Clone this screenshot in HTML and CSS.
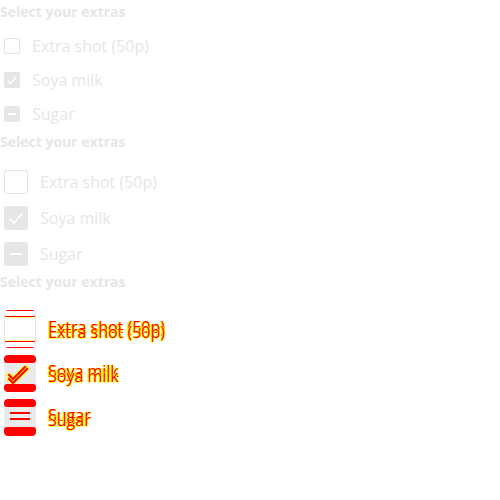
FILE: index.html
```html
<!DOCTYPE html>
<html>
<head>
<meta charset="utf-8">
<link rel="stylesheet" href="styles.css">
</head>
<body>
<section class="group small">
  <h2 class="title">Select your extras</h2>
  <div class="rows">
    <div class="row"><span class="box empty"></span><span class="text">Extra shot (50p)</span></div>
    <div class="row"><span class="box filled"><svg viewBox="0 0 16 16"><polyline points="3.5,8.5 6.5,11.5 12.5,4.5" fill="none" stroke="#fff" stroke-width="1.4"/></svg></span><span class="text">Soya milk</span></div>
    <div class="row"><span class="box filled"><svg viewBox="0 0 16 16"><line x1="4" y1="8" x2="12" y2="8" stroke="#fff" stroke-width="2"/></svg></span><span class="text">Sugar</span></div>
  </div>
</section>
<section class="group medium">
  <h2 class="title">Select your extras</h2>
  <div class="rows">
    <div class="row"><span class="box empty"></span><span class="text">Extra shot (50p)</span></div>
    <div class="row"><span class="box filled"><svg viewBox="0 0 24 24"><polyline points="5.5,12.5 10,17 18.5,7" fill="none" stroke="#fff" stroke-width="1.6"/></svg></span><span class="text">Soya milk</span></div>
    <div class="row"><span class="box filled"><svg viewBox="0 0 24 24"><line x1="6" y1="12" x2="18" y2="12" stroke="#fff" stroke-width="2"/></svg></span><span class="text">Sugar</span></div>
  </div>
</section>
<section class="group large">
  <h2 class="title">Select your extras</h2>
  <div class="rows">
    <div class="row"><span class="box diff outline"><span class="band"></span><span class="mid"></span><span class="band"></span></span><span class="text diff-text">Extra shot (50p)</span></div>
    <div class="row"><span class="box diff solid"><span class="band"></span><span class="mid"><svg viewBox="0 0 32 21"><g fill="none" stroke-linecap="square"><polyline points="5,12 9,16 21,4" stroke="#ff0" stroke-width="4"/><polyline points="5,16 9,20 23,6" stroke="#ff0" stroke-width="4"/><polyline points="5,12 9,16 21,4" stroke="#f00" stroke-width="2"/><polyline points="5,16 9,20 23,6" stroke="#f00" stroke-width="2"/></g></svg></span><span class="band"></span></span><span class="text diff-text">Soya milk</span></div>
    <div class="row"><span class="box diff solid"><span class="band"></span><span class="mid"><svg viewBox="0 0 32 20"><line x1="6" y1="6" x2="26" y2="6" stroke="#f00" stroke-width="2"/><line x1="6" y1="12" x2="26" y2="12" stroke="#f00" stroke-width="2"/></svg></span><span class="band"></span></span><span class="text diff-text">Sugar</span></div>
  </div>
</section>
</body>
</html>
```
FILE: styles.css
```css
html, body {
  margin: 0;
  padding: 0;
  background: #fff;
}
body {
  font-family: "Open Sans", "Liberation Sans", sans-serif;
  color: #e6e6e6;
}
.title {
  margin: 0;
  font-size: 14px;
  font-weight: 700;
  line-height: 24px;
  height: 24px;
  color: #e6e6e6;
}
.rows {
  display: flex;
  flex-direction: column;
}
.row {
  display: flex;
  align-items: center;
  gap: 12px;
  padding-left: 4px;
}
.text {
  font-size: 16px;
  line-height: 22px;
}
.box {
  box-sizing: border-box;
  display: flex;
  align-items: center;
  justify-content: center;
  border-radius: 2px;
  flex: none;
}
.box svg { display: block; width: 100%; height: 100%; }
.box.empty { border: 1px solid #e3e3e3; background: #fff; }
.box.filled { background: #e6e6e6; }

.small .rows { margin-top: 5px; margin-bottom: -1px; }
.small .row { height: 34px; }
.small .box { width: 16px; height: 16px; }

.medium .rows { margin-top: 10px; margin-bottom: -2px; }
.medium .row { height: 36px; }
.medium .box { width: 24px; height: 24px; }
.medium .box.empty { border-radius: 3px; }

.large .rows { margin-top: 13px; }
.large .row { height: 44px; }
.large .box { width: 32px; height: 38px; flex-direction: column; align-items: stretch; justify-content: space-between; border-radius: 4px; overflow: hidden; }
.large .box.solid { height: 37px; background: #ebebeb; }
.large .outline { border-left: 1px solid #e6e6e6; border-right: 1px solid #e6e6e6; }
.outline .band {
  height: 7px;
  box-sizing: border-box;
  border: 1px solid #f00;
  border-radius: 2px;
  margin: 0 -1px;
  box-shadow: 0 0 0 0.5px #ff0;
}
.outline .mid { flex: 1; }
.solid .band { height: 9px; background: #f00; border-radius: 3px; }
.solid .mid { flex: 1; display: flex; }
.solid .mid svg { width: 32px; height: 100%; }

.diff-text {
  color: #f00;
  text-shadow: 1px 0 #ff0, -1px 0 #ff0, 0 1px #ff0, 0 -5px #f00, 1px -5px #ff0, -1px -5px #ff0;
  transform: translateY(3px);
}
```
